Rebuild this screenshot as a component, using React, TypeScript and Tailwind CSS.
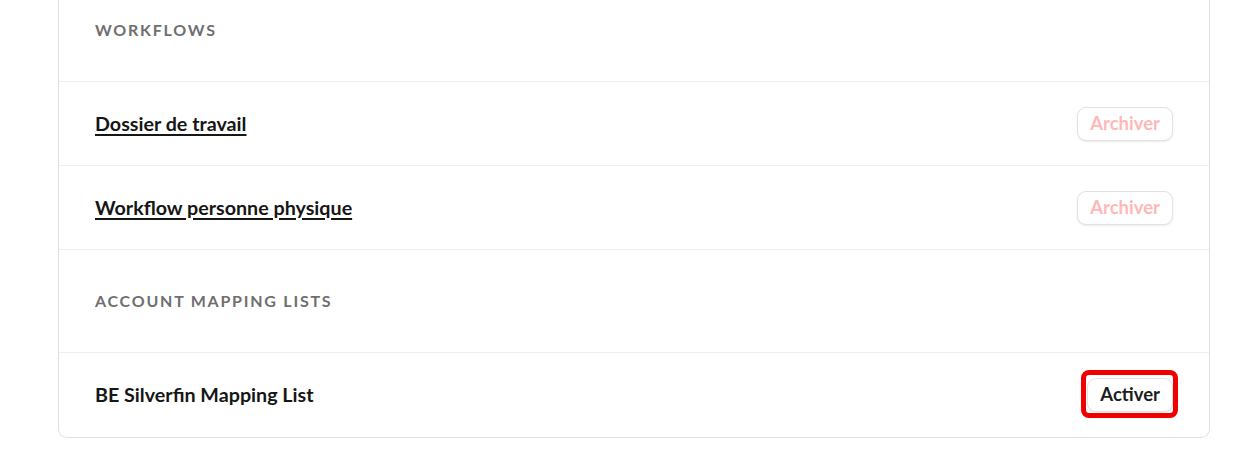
import React from "react";

function Header({ title, first }: { title: string; first?: boolean }) {
  return (
    <div
      className={`flex items-center px-9 border-b border-[#efefef] ${
        first ? "h-[82px] pb-[21px]" : "h-[103px] pb-0"
      }`}
    >
      <span className="text-[16px] font-bold tracking-[0.11em] uppercase text-[#6f6f6f]">
        {title}
      </span>
    </div>
  );
}

function Row({
  label,
  underline,
  action,
  disabled,
  highlight,
  last,
}: {
  label: string;
  underline?: boolean;
  action: string;
  disabled?: boolean;
  highlight?: boolean;
  last?: boolean;
}) {
  return (
    <div
      className={`flex items-center justify-between h-[84px] px-9 ${
        last ? "" : "border-b border-[#efefef]"
      }`}
    >
      <span
        className={`text-[19.7px] font-bold text-[#161616] ${
          underline ? "underline underline-offset-[3px] decoration-[1.5px]" : ""
        }`}
      >
        {label}
      </span>
      <div className="relative">
        <button
          className={`h-[34px] px-[12px] rounded-[9px] border border-[#e2e2e2] bg-white shadow-[0_1px_2px_rgba(0,0,0,0.08)] text-[18.5px] font-bold ${
            disabled ? "text-[#ffb8b8]" : "text-[#1c1c1c]"
          }`}
        >
          {action}
        </button>
        {highlight && (
          <div className="absolute -left-[6px] -right-[5px] -top-[8px] -bottom-[6px] border-[5px] border-[#f00000] rounded-[8px] pointer-events-none" />
        )}
      </div>
    </div>
  );
}

export default function App() {
  return (
    <div
      className="w-[1246px] h-[464px] bg-white overflow-hidden"
      style={{ fontFamily: "Lato, 'Open Sans', sans-serif" }}
    >
      <div className="ml-[58px] w-[1152px] border-x border-b border-[#e0e0e0] rounded-b-[9px] bg-white">
        <Header title="Workflows" first />
        <Row label="Dossier de travail" underline action="Archiver" disabled />
        <Row label="Workflow personne physique" underline action="Archiver" disabled />
        <Header title="Account mapping lists" />
        <Row label="BE Silverfin Mapping List" action="Activer" highlight last />
      </div>
    </div>
  );
}
